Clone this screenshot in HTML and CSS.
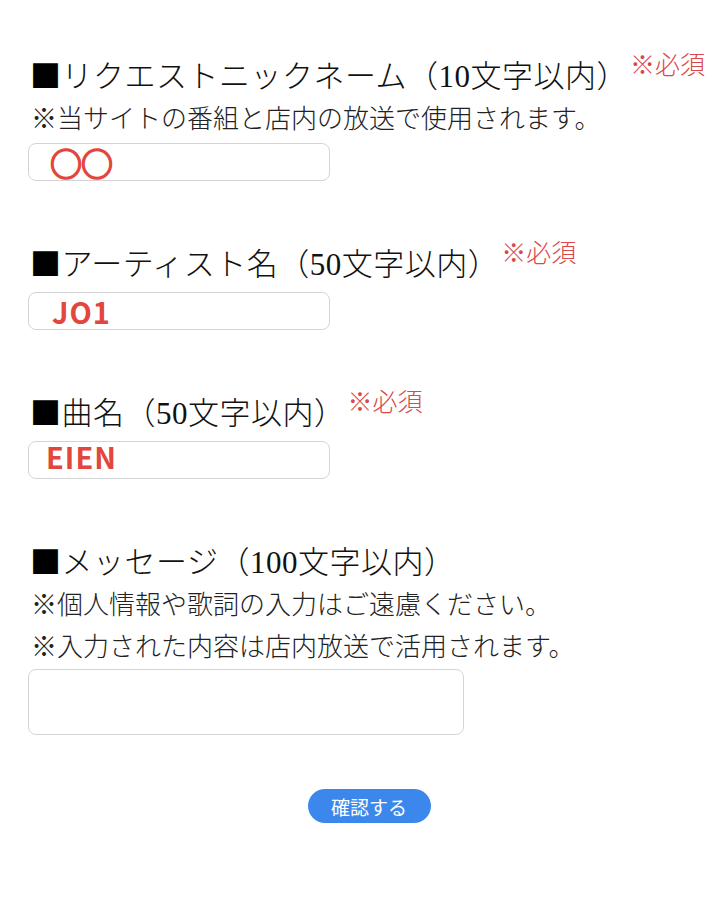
FILE: index.html
```html
<!DOCTYPE html>
<html lang="ja">
<head>
    <meta charset="UTF-8">
    <meta name="viewport" content="width=device-width, initial-scale=1.0">
    <title>リクエスト</title>
    <link rel="stylesheet" href="styles.css">
</head>
<body>

<form class="request-form" id="requestForm">
    <div class="field field-first">
        <p class="field-title"><span class="mark">■</span>リクエストニックネーム（10文字以内）<span class="required">※必須</span></p>
        <p class="note">※当サイトの番組と店内の放送で使用されます。</p>
        <input type="text" class="text-box value-circle" name="nickname" value="○○">
    </div>

    <div class="field">
        <p class="field-title"><span class="mark">■</span>アーティスト名（50文字以内）<span class="required">※必須</span></p>
        <input type="text" class="text-box value-artist" name="artist" value="JO1">
    </div>

    <div class="field">
        <p class="field-title"><span class="mark">■</span>曲名（50文字以内）<span class="required">※必須</span></p>
        <input type="text" class="text-box value-song" name="song" value="EIEN">
    </div>

    <div class="field">
        <p class="field-title"><span class="mark">■</span>メッセージ（100文字以内）</p>
        <p class="note">※個人情報や歌詞の入力はご遠慮ください。</p>
        <p class="note">※入力された内容は店内放送で活用されます。</p>
        <textarea class="message-box" name="message"></textarea>
    </div>

    <div class="actions">
        <button type="submit" class="confirm-button">確認する</button>
    </div>
</form>

</body>
</html>
```

FILE: styles.css
```css
body {
    margin: 0;
    background-color: #ffffff;
    font-family: "Liberation Serif", "Noto Sans CJK JP", serif;
    color: #111111;
}
.request-form {
    padding: 0 0 0 28px;
}
.field {
    margin-top: 61px;
}
.field-first {
    margin-top: 54px;
}
.field-title {
    margin: 0;
    height: 40px;
    font-size: 31px;
    font-weight: 300;
    line-height: 40px;
    letter-spacing: 0.5px;
    padding-left: 2px;
    white-space: nowrap;
}
.mark {
    font-family: "Noto Sans CJK JP", sans-serif;
    color: #000000;
}
.required {
    position: relative;
    top: -13px;
    margin-left: 2px;
    font-size: 25px;
    letter-spacing: 0;
    color: #d9484a;
}
.note {
    margin: 0;
    height: 36px;
    padding: 6px 0 0 3px;
    font-size: 26px;
    font-weight: 300;
    line-height: 40px;
    color: #222222;
}
.text-box {
    display: block;
    width: 302px;
    height: 38px;
    margin-top: 10px;
    padding: 0 0 0 22px;
    border: 1px solid #d4d4d4;
    border-radius: 8px;
    box-sizing: border-box;
    background: #ffffff;
    color: #e2463d;
    font-family: "Noto Sans CJK JP", "Noto Sans", sans-serif;
    font-weight: 700;
    outline: none;
}
.value-circle {
    margin-top: 7px;
    font-size: 32px;
    letter-spacing: -1px;
    padding-left: 21px;
    -webkit-text-stroke: 1.6px #e2463d;
}
.value-artist {
    font-size: 29px;
    letter-spacing: 1px;
    padding-left: 23px;
}
.value-song {
    font-size: 29px;
    letter-spacing: 1px;
    padding: 0 0 8px 17px;
}
.message-box {
    display: block;
    width: 436px;
    height: 66px;
    margin-top: 5px;
    border: 1px solid #d4d4d4;
    border-radius: 8px;
    box-sizing: border-box;
    resize: none;
    outline: none;
}
.actions {
    display: flex;
    justify-content: center;
    width: 660px;
    margin-top: 54px;
    padding-left: 11px;
}
.confirm-button {
    width: 123px;
    height: 34px;
    border: none;
    border-radius: 17px;
    background-color: #3c87ec;
    color: #ffffff;
    font-family: "Noto Sans CJK JP", sans-serif;
    font-size: 19px;
    cursor: pointer;
}
```
